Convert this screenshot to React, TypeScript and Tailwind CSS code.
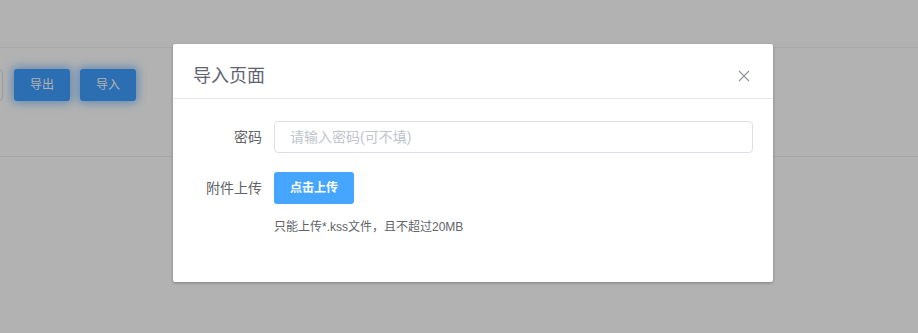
import React from "react";

export default function App() {
  const font = { fontFamily: '"Liberation Sans", "Noto Sans CJK SC", sans-serif' };
  return (
    <div className="relative h-[333px] w-[918px] overflow-hidden bg-white" style={font}>
      {/* page behind */}
      <div className="h-[48px] border-b border-[#f2f2f2]" />
      <div className="flex h-[109px] items-start gap-[10px] border-b border-[#eeeeee] pl-0 pt-[21px]">
        <div className="ml-[-40px] h-[32px] w-[43px] rounded-[4px] border border-[#dcdfe6]" />
        <button className="ml-[1px] h-[32px] w-[56px] rounded-[3px] bg-[#409eff] text-[12px] text-white shadow-[0_0_10px_2px_rgba(64,158,255,0.6)]">
          导出
        </button>
        <button className="h-[32px] w-[56px] rounded-[3px] bg-[#409eff] text-[12px] text-white shadow-[0_0_10px_2px_rgba(64,158,255,0.6)]">
          导入
        </button>
      </div>

      {/* overlay */}
      <div className="absolute inset-0 bg-black/30">
        <div className="ml-[173px] mt-[44px] w-[600px] rounded-[2px] bg-white shadow-[0_1px_3px_rgba(0,0,0,0.3)]">
          <div className="flex items-center justify-between border-b border-[#e4e7ed] px-[20px] pb-[10px] pt-[20px]">
            <span className="text-[18px] leading-[24px] text-[#5f6470]">导入页面</span>
            <svg width="12" height="12" viewBox="0 0 12 12" className="mr-[3px]">
              <path d="M1 1 L11 11 M11 1 L1 11" stroke="#909399" strokeWidth="1.1" />
            </svg>
          </div>
          <div className="px-[20px] pb-[46px] pt-[22px]">
            <div className="flex items-center">
              <label className="w-[81px] pr-[12px] text-right text-[14px] text-[#606266]">密码</label>
              <div className="flex h-[32px] flex-1 items-center rounded-[4px] border border-[#dcdfe6] px-[15px] text-[14px] text-[#c0c4cc]">
                请输入密码(可不填)
              </div>
            </div>
            <div className="mt-[19px] flex items-center">
              <label className="w-[81px] pr-[12px] text-right text-[14px] text-[#606266]">附件上传</label>
              <button className="h-[32px] w-[80px] rounded-[3px] bg-[#46a6ff] text-[12px] font-bold text-white">
                点击上传
              </button>
            </div>
            <div className="ml-[81px] mt-[14px] text-[12px] leading-[18px] text-[#606266]">
              只能上传*.kss文件，且不超过20MB
            </div>
          </div>
        </div>
      </div>
    </div>
  );
}
